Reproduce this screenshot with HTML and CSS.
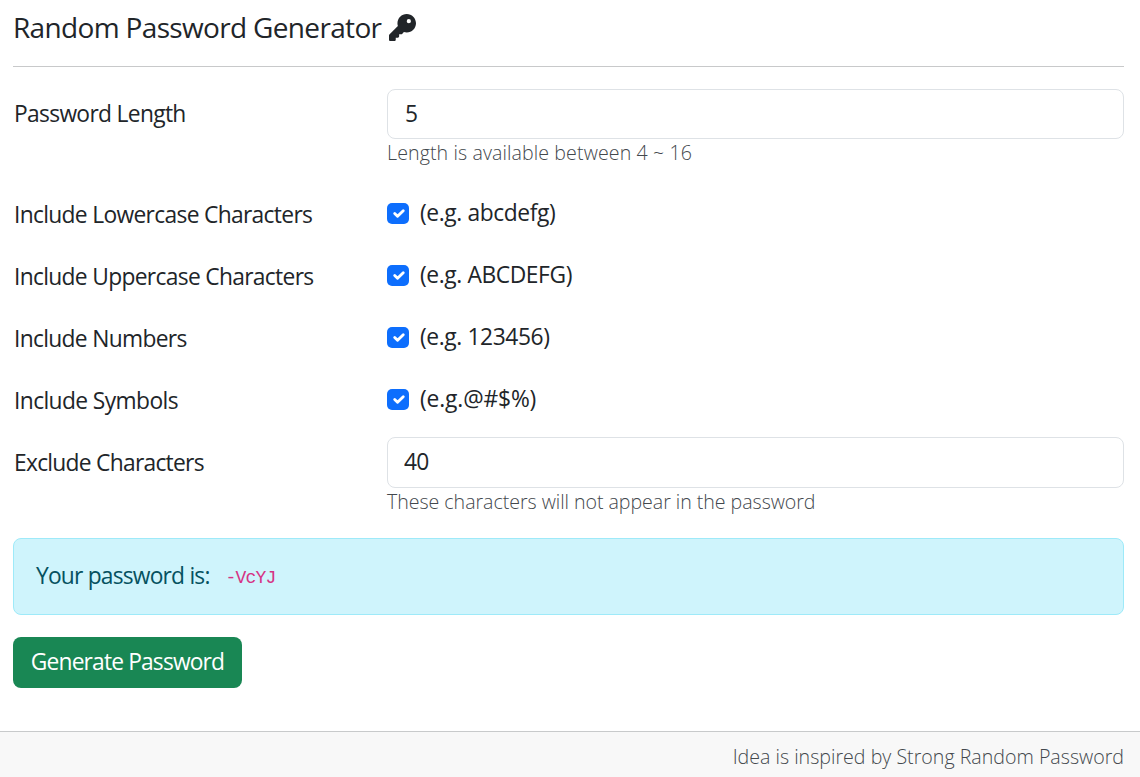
FILE: index.html
```html
<!DOCTYPE html>
<html lang="en">
<head>
<meta charset="utf-8">
<title>Random Password Generator</title>
<link rel="stylesheet" href="styles.css">
</head>
<body>
<main class="container">
  <h1 class="title"><span class="title-text">Random Password Generator</span><svg class="key" viewBox="0 0 512 512"><path fill="currentColor" d="M336 352c97.200 0 176-78.800 176-176S433.200 0 336 0S160 78.800 160 176c0 18.700 2.900 36.800 8.300 53.700L7 391c-4.500 4.500-7 10.600-7 17v80c0 13.300 10.700 24 24 24h80c13.300 0 24-10.700 24-24v-40h40c13.300 0 24-10.700 24-24v-40h40c6.400 0 12.500-2.500 17-7l33.300-33.300c16.900 5.400 35 8.300 53.700 8.300zM376 96a40 40 0 1 1 0 80 40 40 0 1 1 0-80z"/></svg></h1>
  <form class="form">
    <div class="row row-length">
      <label class="label" for="len">Password Length</label>
      <div class="field">
        <input class="control" id="len" type="text" value="5">
        <div class="help help-length">Length is available between 4 ~ 16</div>
      </div>
    </div>
    <div class="row row-check">
      <span class="label">Include Lowercase Characters</span>
      <label class="check"><span class="box"><svg viewBox="0 0 20 20"><path d="m6 10 3 3 6-6"/></svg></span><span class="example">(e.g. abcdefg)</span></label>
    </div>
    <div class="row row-check">
      <span class="label">Include Uppercase Characters</span>
      <label class="check"><span class="box"><svg viewBox="0 0 20 20"><path d="m6 10 3 3 6-6"/></svg></span><span class="example">(e.g. ABCDEFG)</span></label>
    </div>
    <div class="row row-check">
      <span class="label">Include Numbers</span>
      <label class="check"><span class="box"><svg viewBox="0 0 20 20"><path d="m6 10 3 3 6-6"/></svg></span><span class="example">(e.g. 123456)</span></label>
    </div>
    <div class="row row-check row-symbols">
      <span class="label label-symbols">Include Symbols</span>
      <label class="check"><span class="box"><svg viewBox="0 0 20 20"><path d="m6 10 3 3 6-6"/></svg></span><span class="example example-symbols">(e.g.@#$%)</span></label>
    </div>
    <div class="row row-exclude">
      <label class="label" for="exc">Exclude Characters</label>
      <div class="field">
        <input class="control control-tall" id="exc" type="text" value="40">
        <div class="help">These characters will not appear in the password</div>
      </div>
    </div>
    <div class="alert"><span class="alert-text">Your password is:</span><code class="code">-VcYJ</code></div>
    <button class="button" type="button">Generate Password</button>
  </form>
</main>
<footer class="footer"><span class="footer-text">Idea is inspired by Strong Random Password</span></footer>
</body>
</html>
```
FILE: styles.css
```css
* { box-sizing: border-box; }
body {
  margin: 0;
  height: 777px;
  display: flex;
  flex-direction: column;
  overflow: hidden;
  background: #fff;
  color: #212529;
  font-family: "Open Sans", "Noto Sans", sans-serif;
  font-size: 22.8px;
  line-height: 34px;
  letter-spacing: -0.68px;
  white-space: nowrap;
}
.container { flex: 1; padding: 0 16px 0 13px; }
.title {
  display: flex;
  align-items: center;
  gap: 7px;
  margin: 0;
  height: 67px;
  padding: 0 0 12px 0;
  border-bottom: 1px solid #c8c9ca;
  font-size: 28px;
  font-weight: 400;
  letter-spacing: -0.66px;
}
.title-text { width: 369px; }
.key { width: 27px; height: 27px; margin-top: 1px; }
.form { padding-top: 22px; }
.row { display: grid; grid-template-columns: 374px 1fr; }
.row-length { height: 101px; }
.row-check { height: 62px; }
.row-symbols { height: 61px; }
.row-exclude { height: 101px; }
.label { padding: 8px 0 0 1px; }
.label-symbols { letter-spacing: -0.6px; }
.row-exclude .label { padding-top: 9px; letter-spacing: -0.73px; }
.control {
  display: block;
  width: 100%;
  height: 50px;
  padding: 0 17px 2px;
  border: 1px solid #dee2e6;
  border-radius: 8px;
  background: #fff;
  color: inherit;
  font: inherit;
  letter-spacing: inherit;
}
.control-tall { height: 51px; padding-left: 16px; }
.help { color: #43484d; font-size: 19.6px; font-weight: 300; line-height: 28px; letter-spacing: -0.04px; }
.help-length { letter-spacing: 0.1px; }
.check { display: flex; align-items: flex-start; gap: 11px; padding-top: 6px; }
.box { display: grid; place-items: center; width: 22px; height: 21px; margin-top: 7px; border-radius: 5px; background: #0d6efd; }
.box svg { display: block; width: 19px; height: 19px; fill: none; stroke: #fff; stroke-width: 3; stroke-linecap: round; stroke-linejoin: round; }
.example { letter-spacing: -0.4px; }
.example-symbols { letter-spacing: -0.15px; }
.alert {
  display: flex;
  align-items: center;
  height: 77px;
  padding: 0 22px 2px;
  gap: 16px;
  border: 1px solid #9eeaf9;
  border-radius: 8px;
  background: #cff4fc;
  color: #055160;
}
.alert-text { letter-spacing: -0.8px; }
.code { padding-top: 5px; color: #d63384; font-family: "Liberation Mono", monospace; font-size: 18px; letter-spacing: -0.8px; }
.button {
  display: block;
  width: 229px;
  height: 51px;
  margin-top: 22px;
  padding: 0 0 2px;
  border: 0;
  border-radius: 8px;
  background: #198754;
  color: #fff;
  font: inherit;
  letter-spacing: -0.85px;
}
.footer {
  height: 46px;
  padding: 8px 16px 0 0;
  border-top: 1px solid #c8cacb;
  background: #f8f8f8;
  color: #43484d;
  font-size: 19.6px;
  font-weight: 300;
  letter-spacing: 0.01px;
  text-align: right;
}
```
